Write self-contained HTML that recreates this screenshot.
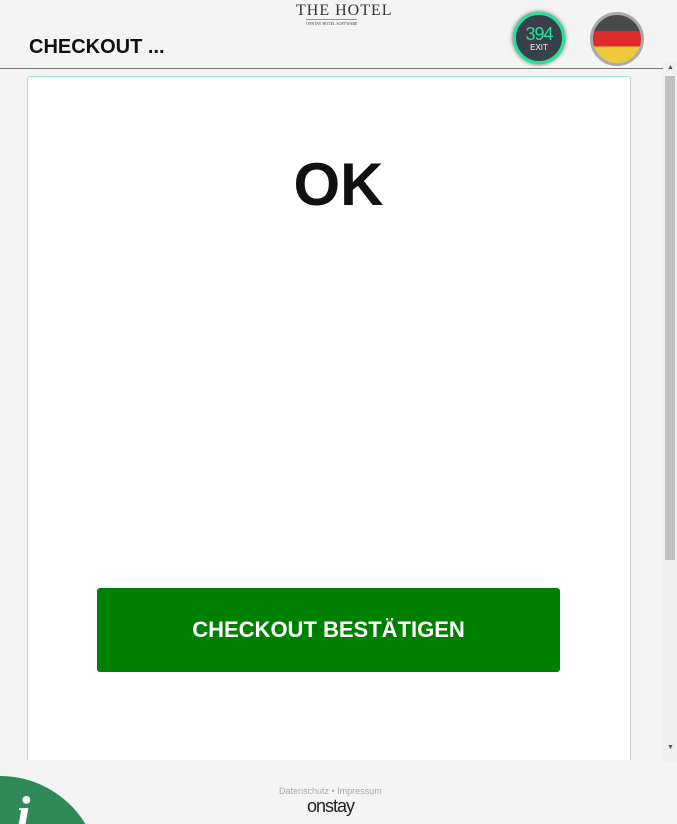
<!DOCTYPE html>
<html style="overflow:hidden;height:824px"><head><meta charset="utf-8"><style>
body{margin:0;width:677px;height:824px;background:#f4f4f4;position:relative;overflow:hidden;font-family:"Liberation Sans",sans-serif}
.hdr{position:absolute;left:0;top:0;width:663px;height:68px;border-bottom:1px solid #777}
.title{position:absolute;left:29px;top:36px;font-size:20px;font-weight:bold;color:#111}
.logo{position:absolute;left:296px;top:2px;font-family:"Liberation Serif",serif;font-size:16px;letter-spacing:1px;color:#333}
.logo2{position:absolute;left:306px;top:19px;font-size:4px;color:#444;border-top:1px solid #999;padding-top:1px;font-family:"Liberation Serif",serif}
.exit{position:absolute;left:513px;top:12px;width:46px;height:46px;border-radius:50%;background:#39404a;border:3px solid #22e39a;box-shadow:0 0 4px #555;text-align:center;color:#fff}
.flag{position:absolute;left:590px;top:12px;width:48px;height:48px;border-radius:50%;border:3px solid #aaa;overflow:hidden;background:linear-gradient(#4a4a4a 0 33%,#dd2a2a 33% 66%,#efc93c 66%)}
.card{position:absolute;left:27px;top:76px;width:602px;height:700px;background:#fff;border:1px solid;border-color:#9de8c8 #ccc #ccc #9de8c8;border-radius:3px}
.ok{position:absolute;left:0;right:0;top:150px;text-align:center;font-size:60px;font-weight:bold;color:#111}
.btn{position:absolute;left:97px;top:588px;width:463px;height:84px;background:#008000;border-radius:3px;color:#fff;font-size:22px;font-weight:bold;text-align:center;line-height:84px}
.foot{position:absolute;left:0;top:760px;width:663px;height:64px;background:#f4f4f4;overflow:hidden}
.sb{position:absolute;left:663px;top:62px;width:14px;height:700px;background:#f0f0f0}
.th{position:absolute;left:665px;top:76px;width:10px;height:484px;background:#c1c1c1}
</style></head><body>
<div class="hdr"></div>
<div class="logo">THE HOTEL</div>
<div class="logo2">ONSTAY HOTEL SOFTWARE</div>
<div class="title">CHECKOUT ...</div>
<div class="exit"><div style="color:#22e39a;font-size:18px;margin-top:9px;letter-spacing:-1px">394</div><div style="font-size:8px;margin-top:-2px">EXIT</div></div>
<div class="flag"></div>
<div class="card"></div>
<div class="ok">OK</div>
<div class="btn">CHECKOUT BESTÄTIGEN</div>
<div class="foot">
<div style="position:absolute;left:279px;top:26px;font-size:9px;color:#aaa">Datenschutz • Impressum</div>
<div style="position:absolute;left:307px;top:36px;font-size:18px;color:#222;letter-spacing:-1px">onstay</div>
<div style="position:absolute;left:-100px;top:16px;width:200px;height:200px;border-radius:50%;background:#2e8b57"></div>
<div style="position:absolute;left:16px;top:26px;font-family:'Liberation Serif',serif;font-style:italic;font-weight:bold;font-size:52px;color:#fff">i</div>
</div>
<div class="sb"></div><div class="th"></div>
<div style="position:absolute;left:667px;top:64px;font-size:7px;color:#555">▲</div>
<div style="position:absolute;left:667px;top:744px;font-size:7px;color:#555">▼</div>
</body></html>
